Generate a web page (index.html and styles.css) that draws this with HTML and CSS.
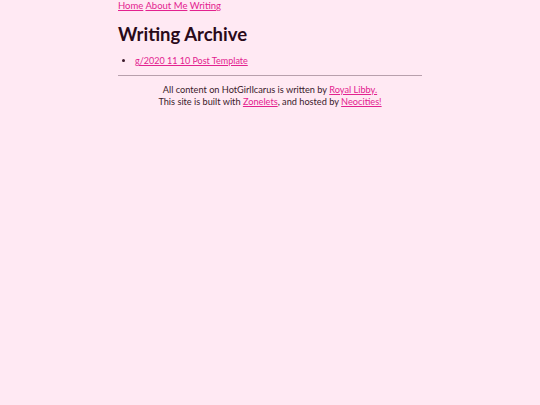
FILE: index.html
```html
<!DOCTYPE html>
<html>
<head>
<meta charset="utf-8">
<link rel="stylesheet" href="styles.css">
</head>
<body>
<div class="page">
  <nav class="nav"><a href="#">Home</a> <a href="#">About Me</a> <a href="#">Writing</a></nav>
  <h1 class="title">Writing Archive</h1>
  <ul class="posts">
    <li><a href="#">g/2020 11 10 Post Template</a></li>
  </ul>
  <hr class="rule">
  <footer class="foot">
    <p>All content on HotGirlIcarus is written by <a href="#">Royal Libby.</a></p>
    <p>This site is built with <a href="#">Zonelets</a>, and hosted by <a href="#">Neocities!</a></p>
  </footer>
</div>
</body>
</html>
```
FILE: styles.css
```css
html, body { margin: 0; padding: 0; }
body {
  background: #ffe9f3;
  color: #3a1a2a;
  font-family: "Lato", "DejaVu Sans", sans-serif;
  font-size: 9px;
}
.page {
  width: 304px;
  margin: 0 auto;
}
a { color: #e3228f; }
.nav {
  font-size: 9.5px;
  line-height: 11px;
}
.title {
  font-size: 18.5px;
  font-weight: 700;
  color: #2a0a1a;
  margin: 12px 0 10px;
  line-height: 22px;
}
.posts {
  margin: 0;
  padding-left: 17px;
  font-size: 9px;
  line-height: 12px;
}
.rule {
  border: 0;
  border-top: 1px solid #b8a0ac;
  margin: 8px 0 8px;
}
.foot {
  text-align: center;
  font-size: 9.2px;
  line-height: 12px;
}
.foot p { margin: 0; }
```
